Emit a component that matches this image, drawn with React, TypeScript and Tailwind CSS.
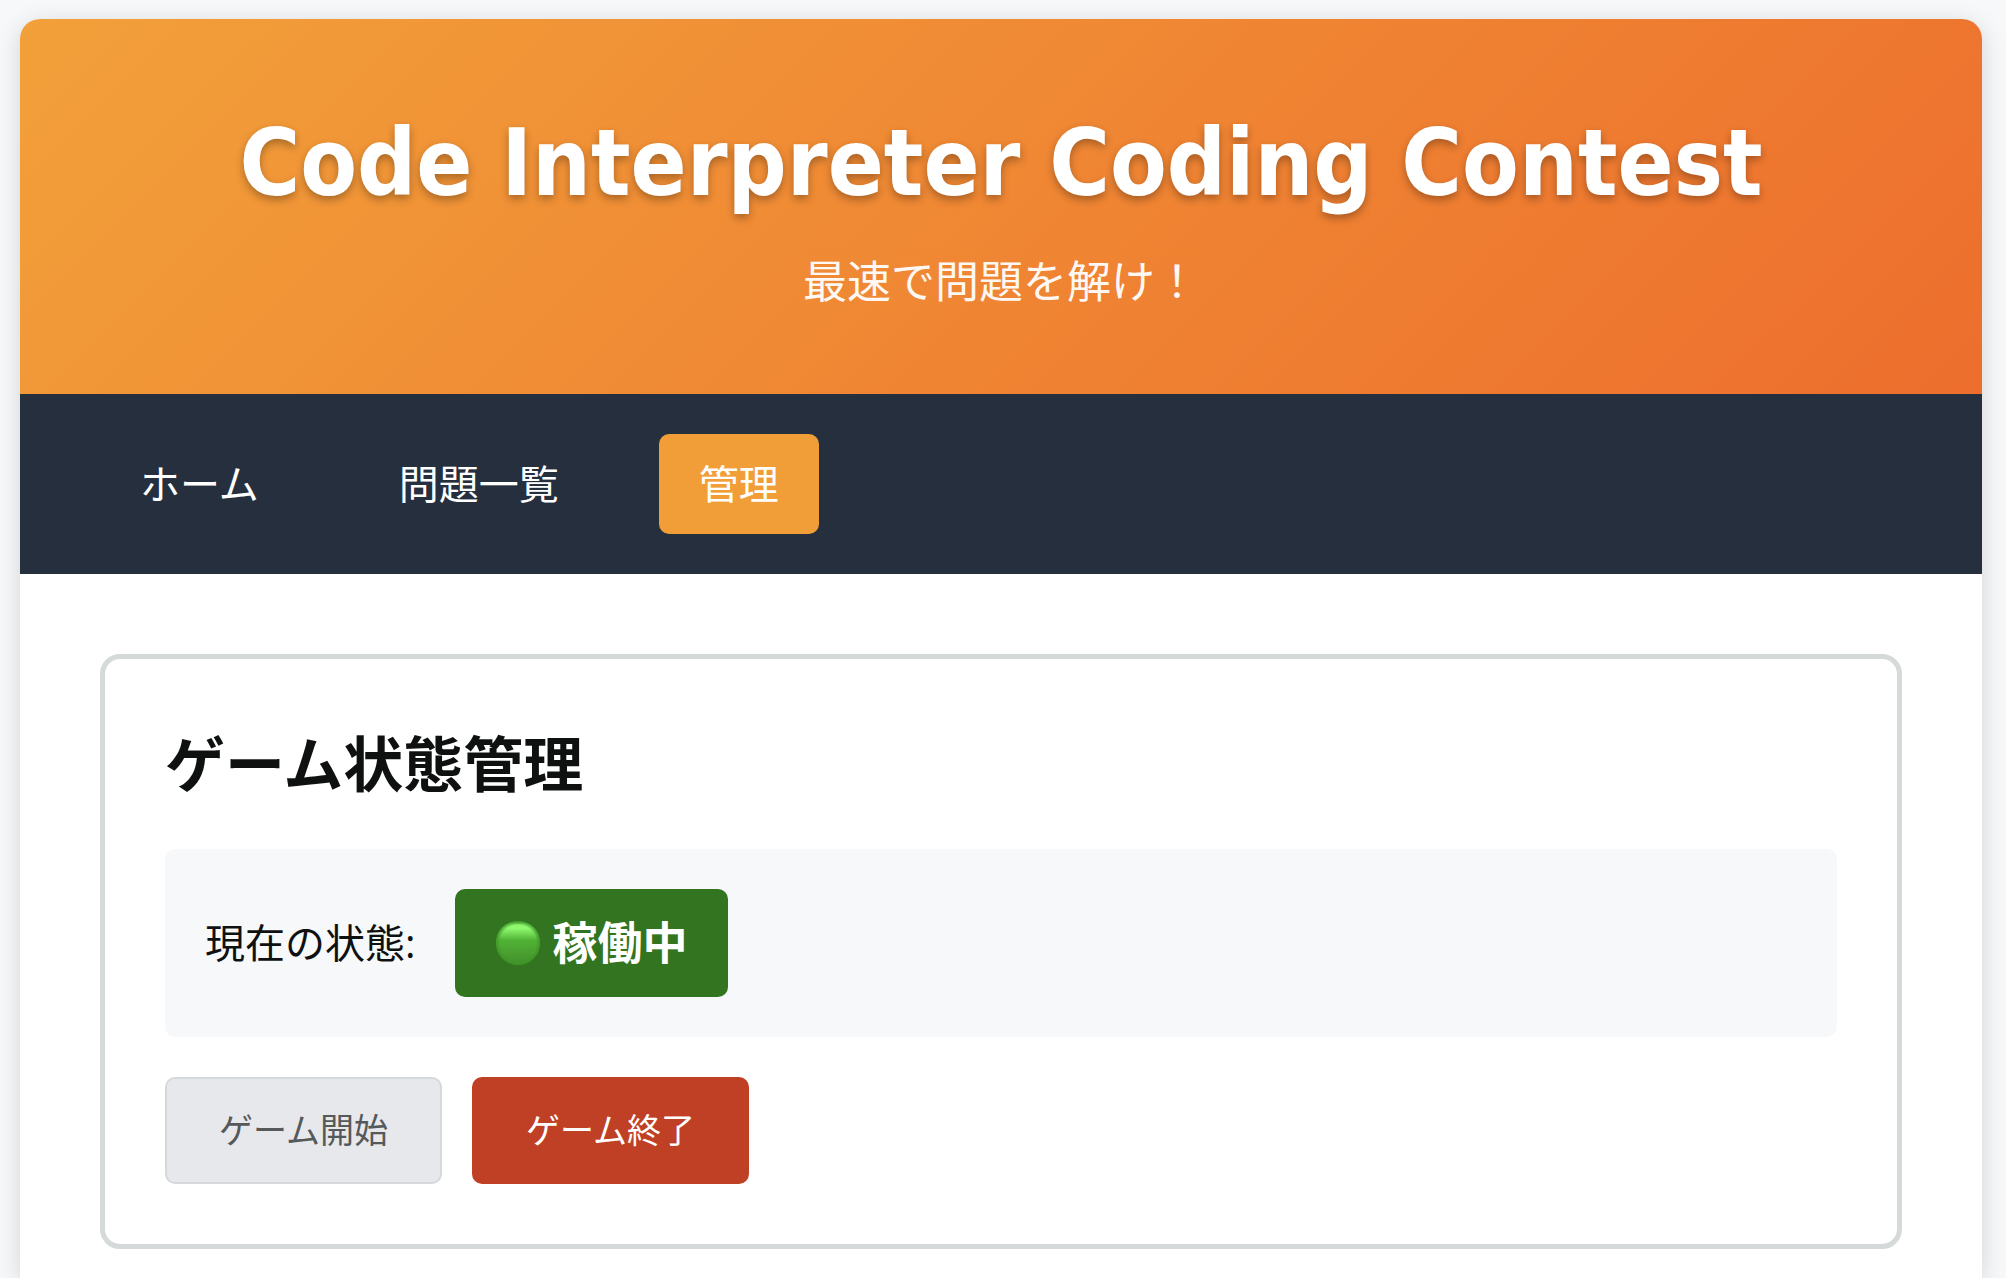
import React from "react";

// links shown in the navigation bar
const navLinks = [
  { label: "ホーム", href: "#home", active: false },
  { label: "問題一覧", href: "#problems", active: false },
  { label: "管理", href: "#admin", active: true },
];

// title banner
const Header: React.FC = () => {
  return (
    <header className="bg-[linear-gradient(135deg,#f2a03a,#ed6e2d)] py-20 text-center text-white">
      <h1 className="mb-5 font-['DejaVu_Sans_Condensed','DejaVu_Sans',sans-serif] text-[92px] leading-[129px] font-bold [text-shadow:0_4px_8px_rgba(0,0,0,0.3)]">
        Code Interpreter Coding Contest
      </h1>
      <p className="text-[44px] leading-[66px] opacity-95">
        最速で問題を解け！
      </p>
    </header>
  );
};

const NavBar: React.FC = () => {
  return (
    <nav className="flex gap-15 bg-[#262f3d] px-20 py-10">
      {navLinks.map((link) => (
        <a
          key={link.href}
          href={link.href}
          className={
            link.active
              ? "rounded-[10px] bg-[#f19e38] px-10 py-5 text-[40px] leading-[60px] text-white"
              : "rounded-[10px] px-10 py-5 text-[40px] leading-[60px] text-white"
          }
        >
          {link.label}
        </a>
      ))}
    </nav>
  );
};

// glossy green light in the status badge
const StatusLight: React.FC = () => {
  return (
    <svg viewBox="0 0 46 46" className="h-[46px] w-[46px]" aria-hidden="true">
      <defs>
        <linearGradient id="light" x1="0" y1="0" x2="0" y2="1">
          <stop offset="0" stopColor="#4aa02e" />
          <stop offset="0.08" stopColor="#8cf46c" />
          <stop offset="0.16" stopColor="#8ffb70" />
          <stop offset="0.44" stopColor="#50b235" />
          <stop offset="0.7" stopColor="#4ba131" />
          <stop offset="1" stopColor="#40902a" />
        </linearGradient>
        <radialGradient id="rim">
          <stop offset="0.82" stopColor="#3c9626" stopOpacity="0" />
          <stop offset="1" stopColor="#3c9626" stopOpacity="0.9" />
        </radialGradient>
      </defs>
      <circle cx="23" cy="23" r="22" fill="url(#light)" />
      <circle cx="23" cy="23" r="22" fill="url(#rim)" />
    </svg>
  );
};

// the game status card
const GameStatus: React.FC = () => {
  return (
    <section className="rounded-[20px] border-5 border-[#d5d9d9] p-15">
      <h2 className="mb-10 text-[60px] leading-[90px] font-bold">
        ゲーム状態管理
      </h2>
      <div className="mb-10 flex items-center gap-[39px] rounded-[10px] bg-[#f7f8fa] p-10">
        <span className="text-[40px] leading-[60px]">現在の状態:</span>
        <span className="flex items-center gap-3 rounded-[10px] bg-[#32741f] px-10 py-5 text-[45px] leading-[68px] font-bold text-white">
          <StatusLight />
          稼働中
        </span>
      </div>
      <div className="flex gap-[30px]">
        <button
          type="button"
          disabled
          className="rounded-[10px] border-2 border-[#d5d9d9] bg-[#e7e8ec] px-[52px] py-[26px] text-[34px] leading-[51px] text-[#565959]"
        >
          ゲーム開始
        </button>
        <button
          type="button"
          className="rounded-[10px] border-2 border-[#bf4024] bg-[#bf4024] px-[52px] py-[26px] text-[34px] leading-[51px] text-white"
        >
          ゲーム終了
        </button>
      </div>
    </section>
  );
};

const App: React.FC = () => {
  return (
    <div className="flex min-h-screen flex-col bg-[#f7f8fa] pt-[19px] pr-6 pl-5 font-['Open_Sans','Noto_Sans_CJK_JP',sans-serif] text-[#0f1111]">
      <div className="grow overflow-hidden rounded-t-[20px] bg-white shadow-[0_5px_25px_rgba(0,0,0,0.15)]">
        <Header />
        <NavBar />
        <main className="p-20 pb-[29px]">
          <GameStatus />
        </main>
      </div>
    </div>
  );
};

export default App;
